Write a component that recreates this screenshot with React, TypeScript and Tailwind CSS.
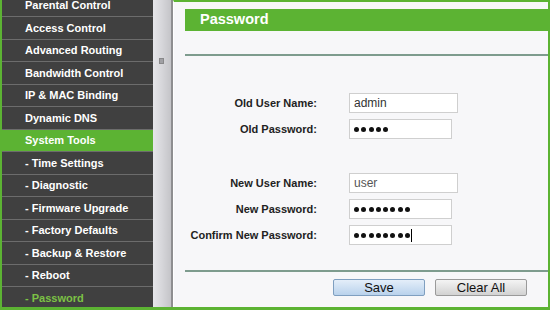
import React from "react";

const menu = [
  { label: "Parental Control" },
  { label: "Access Control" },
  { label: "Advanced Routing" },
  { label: "Bandwidth Control" },
  { label: "IP & MAC Binding" },
  { label: "Dynamic DNS" },
  { label: "System Tools", active: true },
  { label: "- Time Settings" },
  { label: "- Diagnostic" },
  { label: "- Firmware Upgrade" },
  { label: "- Factory Defaults" },
  { label: "- Backup & Restore" },
  { label: "- Reboot" },
  { label: "- Password", current: true },
];

function Dots({ n, caret }: { n: number; caret?: boolean }) {
  return (
    <div className="flex items-center h-full pl-[4px]">
      {Array.from({ length: n }).map((_, i) => (
        <span key={i} className="inline-block w-[5px] h-[5px] rounded-full bg-[#111] mr-[2.3px]" />
      ))}
      {caret && <span className="inline-block w-[1px] h-[13px] bg-black -ml-[1px]" />}
    </div>
  );
}

function Row({
  label,
  width,
  children,
  mt,
}: {
  label: string;
  width: string;
  children: React.ReactNode;
  mt: string;
}) {
  return (
    <div className={`flex items-center h-[20px] ${mt}`}>
      <div className="w-[143px] shrink-0 text-right text-[11px] font-bold text-[#222]">{label}</div>
      <div className={`ml-[32px] h-[20px] ${width} bg-white border border-[#cfcfcf] text-[12px] text-[#333]`}>
        {children}
      </div>
    </div>
  );
}

export default function App() {
  return (
    <div
      className="w-[550px] h-[310px] overflow-hidden bg-[#5cb333] pl-[2px] pr-[2px] pb-[3px] flex"
      style={{ fontFamily: '"Liberation Sans", Arial, sans-serif' }}
    >
      <div className="w-[151px] shrink-0 bg-[#404040] overflow-hidden">
        <div className="-mt-[5.25px]">
          {menu.map((m) => (
            <div
              key={m.label}
              className={`h-[22.5px] border-b border-[#6c6c6c] flex items-center pl-[23px] text-[11px] font-bold ${
                m.active ? "bg-[#5cb333] text-white" : m.current ? "text-[#7cc245]" : "text-white"
              }`}
            >
              {m.label}
            </div>
          ))}
        </div>
      </div>
      <div className="w-[20px] shrink-0 bg-linear-to-r from-[#e6e6ea] via-[#d6d6da] to-[#c4c4c8] border-r-2 border-[#8e8e90] relative">
        <div className="absolute left-[6px] top-[58px] w-[5px] h-[6px] bg-[#a0a0a4] border border-[#88888a]" />
      </div>
      <div className="flex-1 bg-[#f7f7f9] border-t-2 border-[#5cb333] border-l border-l-[#ffffff] flex flex-col">
        <div className="ml-[11px] mt-[7px] h-[22px] bg-[#5cb333] flex items-center pl-[15px] text-[14.5px] font-bold text-white">
          Password
        </div>
        <div className="ml-[11px] mt-[23px] h-[2px] bg-[#7e9c8e]" />
        <Row label="Old User Name:" width="w-[109px]" mt="mt-[37px]">
          <div className="pl-[4px] leading-[18px]">admin</div>
        </Row>
        <Row label="Old Password:" width="w-[103px]" mt="mt-[6px]">
          <Dots n={5} />
        </Row>
        <Row label="New User Name:" width="w-[109px]" mt="mt-[34px]">
          <div className="pl-[4px] leading-[18px] text-[#555]">user</div>
        </Row>
        <Row label="New Password:" width="w-[103px]" mt="mt-[6px]">
          <Dots n={8} />
        </Row>
        <Row label="Confirm New Password:" width="w-[103px]" mt="mt-[6px]">
          <Dots n={8} caret />
        </Row>
        <div className="ml-[11px] mt-[25px] h-[2px] bg-[#7e9c8e]" />
        <div className="mt-[7px] flex pl-[159px] gap-[10px]">
          <button className="w-[92px] h-[17px] rounded-[2px] border border-[#7f9fc0] bg-linear-to-b from-[#e4eef9] to-[#b9d2ec] text-[13px] text-[#111] leading-none">
            Save
          </button>
          <button className="w-[92px] h-[17px] rounded-[2px] border border-[#9a9a9a] bg-linear-to-b from-[#f4f4f4] to-[#d2d2d2] text-[13px] text-[#111] leading-none">
            Clear All
          </button>
        </div>
      </div>
    </div>
  );
}
